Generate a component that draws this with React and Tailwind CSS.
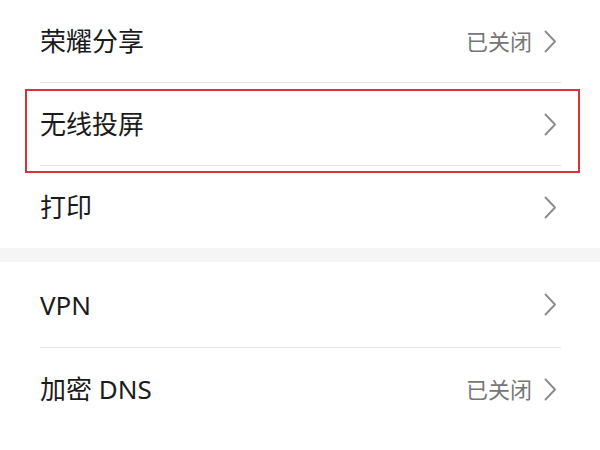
import React from 'react';

const Chevron = () => (
  <svg width="13" height="23" viewBox="0 0 13 23" fill="none" className="shrink-0">
    <polyline points="1.5,1.5 11,11.5 1.5,21.5" stroke="#8c8c8c" strokeWidth="1.9" strokeLinecap="round" strokeLinejoin="round" />
  </svg>
);

const Row = ({ label, value, divider, height = 'h-[82px]' }) => (
  <div className="pl-10 pr-[39px]">
    <div className={`flex items-center justify-between pr-[4px] ${height}`}>
      <span className="text-[26px] text-[#1b1b1b] leading-none">{label}</span>
      <div className="flex items-center gap-[12px]">
        {value && <span className="text-[22px] text-[#767676] leading-none">{value}</span>}
        <Chevron />
      </div>
    </div>
    {divider && <div className="h-px bg-[#e4e4e8]" />}
  </div>
);

export default function App() {
  return (
    <div
      className="w-[600px] h-[450px] bg-white overflow-hidden"
      style={{ fontFamily: '"Noto Sans", "Noto Sans CJK SC", sans-serif' }}
    >
      <Row label="荣耀分享" value="已关闭" divider />
      <div className="relative">
        <Row label="无线投屏" divider />
        <div className="absolute left-[25px] top-[6px] w-[555px] h-[84px] border-2 border-[#d8323a] pointer-events-none" />
      </div>
      <Row label="打印" />
      <div className="h-[14px] bg-[#f5f5f5]" />
      <Row label="VPN" divider height="h-[85px]" />
      <Row label="加密 DNS" value="已关闭" />
    </div>
  );
}
